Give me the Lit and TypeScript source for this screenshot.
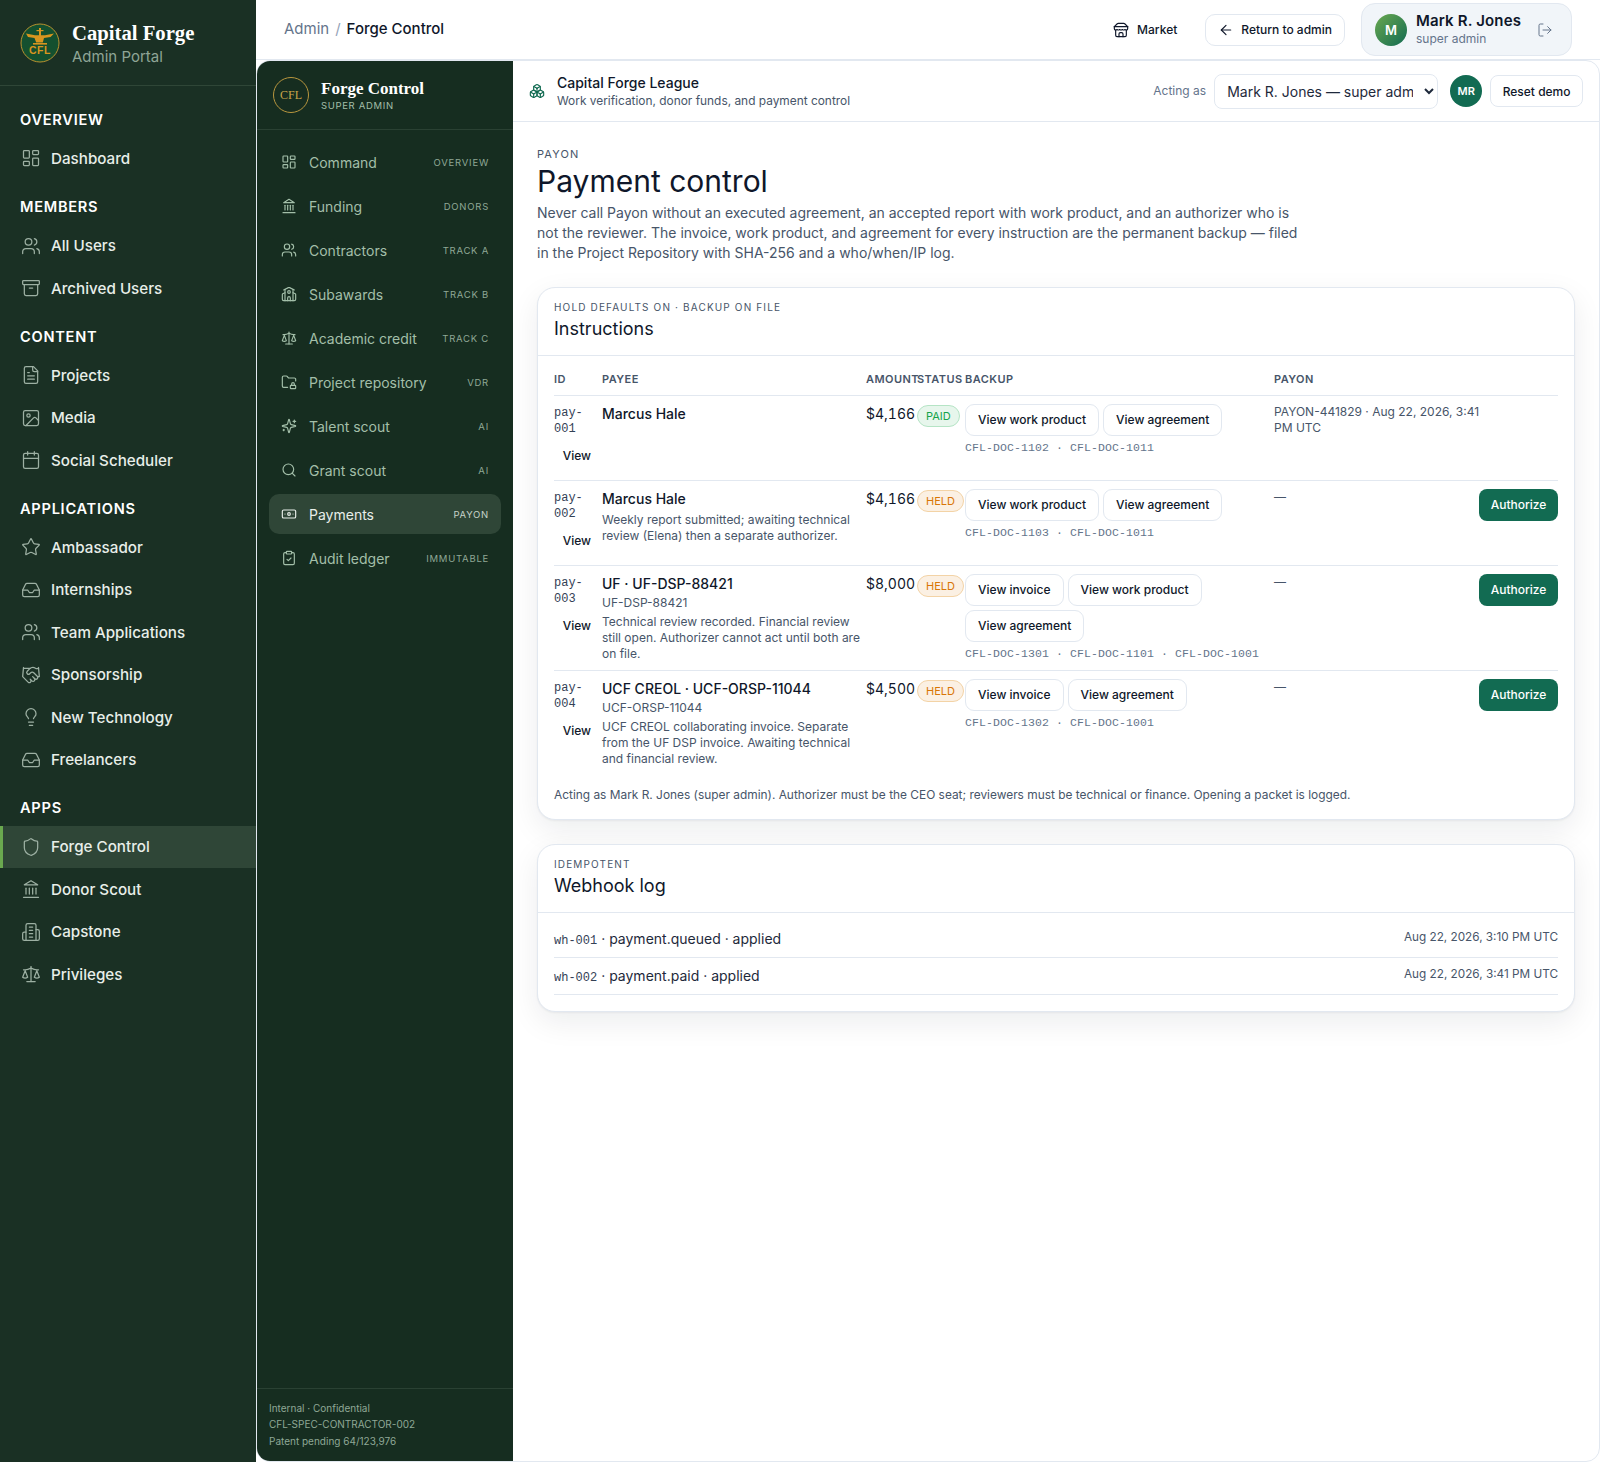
import { LitElement, html, css, svg } from 'lit';
import { customElement } from 'lit/decorators.js';

const icons: Record<string, unknown> = {
  dashboard: svg`<rect x="3" y="3" width="7" height="9" rx="1"/><rect x="14" y="3" width="7" height="5" rx="1"/><rect x="14" y="12" width="7" height="9" rx="1"/><rect x="3" y="16" width="7" height="5" rx="1"/>`,
  users: svg`<path d="M16 21v-2a4 4 0 0 0-4-4H6a4 4 0 0 0-4 4v2"/><circle cx="9" cy="7" r="4"/><path d="M22 21v-2a4 4 0 0 0-3-3.87"/><path d="M16 3.13a4 4 0 0 1 0 7.75"/>`,
  archive: svg`<rect x="2" y="3" width="20" height="5" rx="1"/><path d="M4 8v11a2 2 0 0 0 2 2h12a2 2 0 0 0 2-2V8"/><path d="M10 12h4"/>`,
  file: svg`<path d="M15 2H6a2 2 0 0 0-2 2v16a2 2 0 0 0 2 2h12a2 2 0 0 0 2-2V7Z"/><path d="M14 2v4a2 2 0 0 0 2 2h4"/><path d="M10 9H8"/><path d="M16 13H8"/><path d="M16 17H8"/>`,
  image: svg`<rect x="3" y="3" width="18" height="18" rx="2"/><circle cx="9" cy="9" r="2"/><path d="m21 15-3.086-3.086a2 2 0 0 0-2.828 0L6 21"/>`,
  calendar: svg`<path d="M8 2v4"/><path d="M16 2v4"/><rect x="3" y="4" width="18" height="18" rx="2"/><path d="M3 10h18"/>`,
  star: svg`<path d="M11.525 2.295a.53.53 0 0 1 .95 0l2.31 4.679a2.123 2.123 0 0 0 1.595 1.16l5.166.756a.53.53 0 0 1 .294.904l-3.736 3.638a2.123 2.123 0 0 0-.611 1.878l.882 5.14a.53.53 0 0 1-.771.56l-4.618-2.428a2.122 2.122 0 0 0-1.973 0L6.396 21.01a.53.53 0 0 1-.77-.56l.881-5.139a2.122 2.122 0 0 0-.611-1.879L2.16 9.795a.53.53 0 0 1 .294-.906l5.165-.755a2.122 2.122 0 0 0 1.597-1.16z"/>`,
  inbox: svg`<polyline points="22 12 16 12 14 15 10 15 8 12 2 12"/><path d="M5.45 5.11 2 12v6a2 2 0 0 0 2 2h16a2 2 0 0 0 2-2v-6l-3.45-6.89A2 2 0 0 0 16.76 4H7.24a2 2 0 0 0-1.79 1.11z"/>`,
  handshake: svg`<path d="m11 17 2 2a1 1 0 1 0 3-3"/><path d="m14 14 2.5 2.5a1 1 0 1 0 3-3l-3.88-3.88a3 3 0 0 0-4.24 0l-.88.88a1 1 0 1 1-3-3l2.81-2.81a5.79 5.79 0 0 1 7.06-.87l.47.28a2 2 0 0 0 1.42.25L21 4"/><path d="m21 3 1 11h-2"/><path d="M3 3 2 14l6.5 6.5a1 1 0 1 0 3-3"/><path d="M3 4h8"/>`,
  bulb: svg`<path d="M15 14c.2-1 .7-1.7 1.5-2.5 1-.9 1.5-2.2 1.5-3.5A6 6 0 0 0 6 8c0 1 .2 2.2 1.5 3.5.7.7 1.3 1.5 1.5 2.5"/><path d="M9 18h6"/><path d="M10 22h4"/>`,
  shield: svg`<path d="M20 13c0 5-3.5 7.5-7.66 8.95a1 1 0 0 1-.67-.01C7.5 20.5 4 18 4 13V6a1 1 0 0 1 1-1c2 0 4.5-1.2 6.24-2.72a1.17 1.17 0 0 1 1.52 0C14.51 3.81 17 5 19 5a1 1 0 0 1 1 1z"/>`,
  landmark: svg`<path d="M3 22h18"/><path d="M6 18v-7"/><path d="M10 18v-7"/><path d="M14 18v-7"/><path d="M18 18v-7"/><path d="M12 2l8 5H4z"/>`,
  building: svg`<path d="M6 22V4a2 2 0 0 1 2-2h8a2 2 0 0 1 2 2v18Z"/><path d="M6 12H4a2 2 0 0 0-2 2v6a2 2 0 0 0 2 2h2"/><path d="M18 9h2a2 2 0 0 1 2 2v9a2 2 0 0 1-2 2h-2"/><path d="M10 6h4"/><path d="M10 10h4"/><path d="M10 14h4"/><path d="M10 18h4"/>`,
  scale: svg`<path d="m16 16 3-8 3 8c-.87.65-1.92 1-3 1s-2.13-.35-3-1Z"/><path d="m2 16 3-8 3 8c-.87.65-1.92 1-3 1s-2.13-.35-3-1Z"/><path d="M7 21h10"/><path d="M12 3v18"/><path d="M3 7h2c2 0 5-1 7-2 2 1 5 2 7 2h2"/>`,
  school: svg`<path d="M14 22v-4a2 2 0 1 0-4 0v4"/><path d="m18 10 3.447 1.724a1 1 0 0 1 .553.894V20a2 2 0 0 1-2 2H4a2 2 0 0 1-2-2v-7.382a1 1 0 0 1 .553-.894L6 10"/><path d="M18 5v17"/><path d="m4 6 7.106-3.553a2 2 0 0 1 1.788 0L20 6"/><path d="M6 5v17"/><circle cx="12" cy="9" r="2"/>`,
  folder: svg`<rect x="14" y="17" width="8" height="5" rx="1"/><path d="M10 20H4a2 2 0 0 1-2-2V5a2 2 0 0 1 2-2h3.9a2 2 0 0 1 1.69.9l.81 1.2a2 2 0 0 0 1.67.9H20a2 2 0 0 1 2 2v2.5"/><path d="M20 17v-2a2 2 0 1 0-4 0v2"/>`,
  sparkles: svg`<path d="M9.937 15.5A2 2 0 0 0 8.5 14.063l-6.135-1.582a.5.5 0 0 1 0-.962L8.5 9.936A2 2 0 0 0 9.937 8.5l1.582-6.135a.5.5 0 0 1 .963 0L14.063 8.5A2 2 0 0 0 15.5 9.937l6.135 1.581a.5.5 0 0 1 0 .964L15.5 14.063a2 2 0 0 0-1.437 1.437l-1.582 6.135a.5.5 0 0 1-.963 0z"/><path d="M20 3v4"/><path d="M22 5h-4"/><path d="M4 17v2"/><path d="M5 18H3"/>`,
  search: svg`<circle cx="11" cy="11" r="8"/><path d="m21 21-4.3-4.3"/>`,
  banknote: svg`<rect x="2" y="6" width="20" height="12" rx="2"/><circle cx="12" cy="12" r="2"/><path d="M6 12h.01M18 12h.01"/>`,
  clipboard: svg`<rect x="8" y="2" width="8" height="4" rx="1"/><path d="M16 4h2a2 2 0 0 1 2 2v14a2 2 0 0 1-2 2H6a2 2 0 0 1-2-2V6a2 2 0 0 1 2-2h2"/><path d="m9 14 2 2 4-4"/>`,
  store: svg`<path d="m2 7 4.41-4.41A2 2 0 0 1 7.83 2h8.34a2 2 0 0 1 1.42.59L22 7"/><path d="M4 12v8a2 2 0 0 0 2 2h12a2 2 0 0 0 2-2v-8"/><path d="M15 22v-4a2 2 0 0 0-2-2h-2a2 2 0 0 0-2 2v4"/><path d="M2 7h20"/><path d="M22 7v3a2 2 0 0 1-2 2 2.7 2.7 0 0 1-1.59-.63.7.7 0 0 0-.82 0A2.7 2.7 0 0 1 16 12a2.7 2.7 0 0 1-1.59-.63.7.7 0 0 0-.82 0A2.7 2.7 0 0 1 12 12a2.7 2.7 0 0 1-1.59-.63.7.7 0 0 0-.82 0A2.7 2.7 0 0 1 8 12a2.7 2.7 0 0 1-1.59-.63.7.7 0 0 0-.82 0A2.7 2.7 0 0 1 4 12a2 2 0 0 1-2-2V7"/>`,
  arrow: svg`<path d="m12 19-7-7 7-7"/><path d="M19 12H5"/>`,
  logout: svg`<path d="M9 21H5a2 2 0 0 1-2-2V5a2 2 0 0 1 2-2h4"/><polyline points="16 17 21 12 16 7"/><path d="M21 12H9"/>`,
  boxes: svg`<path d="M2.97 12.92A2 2 0 0 0 2 14.63v3.24a2 2 0 0 0 .97 1.71l3 1.8a2 2 0 0 0 2.06 0L12 19v-5.5l-5-3-4.03 2.42Z"/><path d="m7 16.5-4.74-2.85"/><path d="m7 16.5 5-3"/><path d="M7 16.5v5.17"/><path d="M12 13.5V19l3.97 2.38a2 2 0 0 0 2.06 0l3-1.8a2 2 0 0 0 .97-1.71v-3.24a2 2 0 0 0-.97-1.71L17 10.5l-5 3Z"/><path d="m17 16.5-5-3"/><path d="m17 16.5 4.74-2.85"/><path d="M17 16.5v5.17"/><path d="M7.97 4.42A2 2 0 0 0 7 6.13v4.37l5 3 5-3V6.13a2 2 0 0 0-.97-1.71l-3-1.8a2 2 0 0 0-2.06 0l-3 1.8Z"/><path d="M12 8 7.26 5.15"/><path d="m12 8 4.74-2.85"/><path d="M12 13.5V8"/>`,
};

const icon = (name: string, size: number, stroke = 2) => html`<svg
  class="icon" width=${size} height=${size} viewBox="0 0 24 24" fill="none" stroke="currentColor"
  stroke-width=${stroke} stroke-linecap="round" stroke-linejoin="round">${icons[name]}</svg>`;

const adminNav = [
  { label: 'Overview', items: [['Dashboard', 'dashboard']] },
  { label: 'Members', items: [['All Users', 'users'], ['Archived Users', 'archive']] },
  { label: 'Content', items: [['Projects', 'file'], ['Media', 'image'], ['Social Scheduler', 'calendar']] },
  {
    label: 'Applications',
    items: [['Ambassador', 'star'], ['Internships', 'inbox'], ['Team Applications', 'users'], ['Sponsorship', 'handshake'], ['New Technology', 'bulb'], ['Freelancers', 'inbox']],
  },
  { label: 'Apps', items: [['Forge Control', 'shield'], ['Donor Scout', 'landmark'], ['Capstone', 'building'], ['Privileges', 'scale']] },
];

const forgeNav = [
  ['Command', 'dashboard', 'Overview'],
  ['Funding', 'landmark', 'Donors'],
  ['Contractors', 'users', 'Track A'],
  ['Subawards', 'school', 'Track B'],
  ['Academic credit', 'scale', 'Track C'],
  ['Project repository', 'folder', 'VDR'],
  ['Talent scout', 'sparkles', 'AI'],
  ['Grant scout', 'search', 'AI'],
  ['Payments', 'banknote', 'Payon'],
  ['Audit ledger', 'clipboard', 'Immutable'],
];

const rows = [
  { id: 'pay-001', name: 'Marcus Hale', amount: '$4,166', status: 'paid', docs: ['View work product', 'View agreement'], refs: 'CFL-DOC-1102 · CFL-DOC-1011', payon: 'PAYON-441829 · Aug 22, 2026, 3:41 PM UTC' },
  { id: 'pay-002', name: 'Marcus Hale', note: 'Weekly report submitted; awaiting technical review (Elena) then a separate authorizer.', amount: '$4,166', status: 'held', docs: ['View work product', 'View agreement'], refs: 'CFL-DOC-1103 · CFL-DOC-1011', payon: '—' },
  { id: 'pay-003', name: 'UF · UF-DSP-88421', sub: 'UF-DSP-88421', note: 'Technical review recorded. Financial review still open. Authorizer cannot act until both are on file.', amount: '$8,000', status: 'held', docs: ['View invoice', 'View work product', 'View agreement'], refs: 'CFL-DOC-1301 · CFL-DOC-1101 · CFL-DOC-1001', payon: '—' },
  { id: 'pay-004', name: 'UCF CREOL · UCF-ORSP-11044', sub: 'UCF-ORSP-11044', note: 'UCF CREOL collaborating invoice. Separate from the UF DSP invoice. Awaiting technical and financial review.', amount: '$4,500', status: 'held', docs: ['View invoice', 'View agreement'], refs: 'CFL-DOC-1302 · CFL-DOC-1001', payon: '—' },
];

const hooks = [
  ['wh-001', 'payment.queued · applied', 'Aug 22, 2026, 3:10 PM UTC'],
  ['wh-002', 'payment.paid · applied', 'Aug 22, 2026, 3:41 PM UTC'],
];

@customElement('app-root')
export class AppRoot extends LitElement {
  static styles = css`
    :host {
      display: flex;
      width: 1600px;
      height: 1462px;
      background: #fff;
      color: #0f172a;
      font-family: Inter, 'Liberation Sans', sans-serif;
      overflow: hidden;
    }
    .icon { flex: none; display: block; }
    .mono { font-family: 'Liberation Mono', monospace; }

    /* outer admin sidebar */
    .side {
      flex: none;
      width: 256px;
      background: #1a3024;
      color: #e8eee9;
    }
    .brand {
      height: 86px;
      box-sizing: border-box;
      display: flex;
      align-items: center;
      gap: 12px;
      padding: 0 20px;
      border-bottom: 1px solid #2f4637;
    }
    .brand-text { padding-top: 3px; }
    .brand-name {
      font-family: 'Liberation Serif', serif;
      font-weight: 700;
      font-size: 20.7px;
      line-height: 25px;
      color: #fff;
    }
    .brand-sub { margin-top: 1px; font-size: 15px; line-height: 20px; color: #8fa596; }
    .groups { padding-top: 18px; }
    .group { margin-bottom: 11.5px; }
    .group-label {
      padding: 0 20px;
      font-size: 14.6px;
      line-height: 33.25px;
      font-weight: 600;
      letter-spacing: 0.05em;
      text-transform: uppercase;
      color: #fff;
    }
    .item {
      height: 42.45px;
      display: flex;
      align-items: center;
      gap: 10px;
      padding: 0 20px 0 21px;
      font-size: 15.2px;
      font-weight: 500;
    }
    .item .icon { color: #9db0a3; }
    .item.on {
      background: #2f4637;
      box-shadow: inset 3px 0 0 #6aa84f;
    }

    /* right column */
    .right { flex: 1; min-width: 0; display: flex; flex-direction: column; }
    .top {
      flex: none;
      height: 60px;
      box-sizing: border-box;
      display: flex;
      align-items: center;
      padding: 0 28px;
      border-bottom: 1px solid #e2e8f0;
    }
    .crumbs { display: flex; gap: 6px; font-size: 15px; color: #64748b; flex: 1; padding-bottom: 2px; }
    .crumbs b { font-weight: 500; color: #0f172a; }
    .crumbs i { font-style: normal; color: #94a3b8; }
    .market { display: flex; align-items: center; gap: 8px; font-size: 12px; font-weight: 500; margin-right: 28px; }
    .back {
      height: 32px;
      box-sizing: border-box;
      display: flex;
      align-items: center;
      gap: 7px;
      padding: 0 12px;
      border: 1px solid #e2e8f0;
      border-radius: 10px;
      font-size: 12px;
      font-weight: 500;
      margin-right: 16px;
    }
    .user {
      width: 211px;
      height: 53px;
      box-sizing: border-box;
      display: flex;
      align-items: center;
      gap: 9px;
      padding: 0 18px 0 13px;
      background: #f1f5f9;
      border: 1px solid #e2e8f0;
      border-radius: 14px;
    }
    .user-av {
      width: 32px;
      height: 32px;
      border-radius: 50%;
      display: grid;
      place-items: center;
      background: linear-gradient(135deg, #6aa84f, #126b52);
      color: #fff;
      font-size: 13px;
      font-weight: 600;
    }
    .user-text { flex: 1; padding-bottom: 2px; }
    .user-name { font-size: 15px; line-height: 20px; font-weight: 600; letter-spacing: 0.01em; }
    .user-role { font-size: 12px; line-height: 16px; color: #64748b; }
    .user .icon { color: #64748b; }

    /* forge control shell */
    .shell {
      flex: 1;
      min-height: 0;
      display: flex;
      border: 1px solid #e2e8f0;
      border-radius: 14px;
      overflow: hidden;
      background: #fff;
    }
    .fside {
      flex: none;
      width: 256px;
      display: flex;
      flex-direction: column;
      background: #162d20;
      color: #a3bfa9;
    }
    .fbrand {
      flex: none;
      height: 69px;
      box-sizing: border-box;
      display: flex;
      align-items: center;
      gap: 12px;
      padding: 0 16px;
      border-bottom: 1px solid #2a4133;
    }
    .seal {
      width: 36px;
      height: 36px;
      box-sizing: border-box;
      border: 1px solid #b8963e;
      border-radius: 50%;
      display: grid;
      place-items: center;
      font-family: 'Liberation Serif', serif;
      font-size: 12px;
      color: #c9a64a;
    }
    .fbrand-text { padding-top: 2px; }
    .fbrand-name {
      font-family: 'Liberation Serif', serif;
      font-weight: 700;
      font-size: 17px;
      line-height: 20px;
      color: #fff;
    }
    .fbrand-sub { font-size: 9.5px; line-height: 14px; letter-spacing: 0.07em; color: #a3bfa9; }
    .fnav { flex: 1; display: flex; flex-direction: column; gap: 4px; padding: 12px; }
    .fitem {
      height: 40px;
      display: flex;
      align-items: center;
      gap: 12px;
      padding: 0 12px;
      border-radius: 10px;
      font-size: 14px;
    }
    .fitem span { flex: 1; }
    .fitem em {
      font-style: normal;
      font-size: 9.5px;
      letter-spacing: 0.08em;
      text-transform: uppercase;
      color: #8fa896;
    }
    .fitem.on { background: #2f4637; color: #e8eee9; }
    .fitem.on em { color: #c6d3c9; }
    .ffoot {
      flex: none;
      padding: 11px 12px 12px;
      border-top: 1px solid #2a4133;
      font-size: 10px;
      line-height: 16.5px;
      color: #8fa896;
    }

    /* main */
    .main { flex: 1; min-width: 0; display: flex; flex-direction: column; }
    .mhead {
      flex: none;
      height: 61px;
      box-sizing: border-box;
      display: flex;
      align-items: center;
      gap: 8px;
      padding: 0 16px;
      border-bottom: 1px solid #e2e8f0;
    }
    .mhead > .icon { color: #126b52; margin-right: 4px; }
    .org { flex: 1; }
    .org-name { font-size: 14px; line-height: 18px; font-weight: 500; }
    .org-sub { margin-top: 1px; font-size: 11.9px; line-height: 16px; color: #475569; }
    .acting { font-size: 12px; color: #64748b; padding-bottom: 1px; }
    select {
      width: 224px;
      height: 35px;
      box-sizing: border-box;
      padding: 0 8px;
      background: #fff;
      border: 1px solid #e2e8f0;
      border-radius: 8px;
      font: inherit;
      font-size: 14px;
      color: #1e293b;
      margin-right: 4px;
    }
    .mr {
      width: 32px;
      height: 32px;
      border-radius: 50%;
      display: grid;
      place-items: center;
      background: #126b52;
      color: #fff;
      font-size: 11px;
      font-weight: 600;
    }
    .reset {
      height: 32px;
      box-sizing: border-box;
      display: flex;
      align-items: center;
      padding: 0 11.5px;
      border: 1px solid #e2e8f0;
      border-radius: 8px;
      font-size: 12px;
      font-weight: 500;
    }
    .content { padding: 24px 24px 0; }
    .eyebrow {
      font-size: 11px;
      line-height: 16px;
      letter-spacing: 0.1em;
      text-transform: uppercase;
      color: #475569;
    }
    h1 { margin: 0; font-size: 30px; line-height: 38px; font-weight: 400; color: #0f172a; }
    .lede { margin: 3px 0 24px; max-width: 772px; font-size: 14px; line-height: 20px; color: #475569; }
    .card {
      border: 1px solid #e2e8f0;
      border-radius: 18px;
      background: #fff;
      box-shadow: 0 1px 2px rgba(15, 23, 42, 0.05), 0 10px 30px rgba(15, 23, 42, 0.08);
      margin-bottom: 24px;
    }
    .card-head { height: 68px; box-sizing: border-box; padding: 11px 16px 0; border-bottom: 1px solid #e2e8f0; }
    .card-head .eyebrow { font-size: 10px; letter-spacing: 0.115em; }
    h2 { margin: 0; font-size: 18px; line-height: 27px; font-weight: 400; color: #0f172a; }
    .card-body { padding: 0 16px 16px; }

    table { width: 100%; table-layout: fixed; border-collapse: collapse; }
    th {
      height: 39px;
      box-sizing: border-box;
      padding: 0 0 8px;
      vertical-align: bottom;
      text-align: left;
      white-space: nowrap;
      font-size: 11px;
      line-height: 16px;
      font-weight: 600;
      letter-spacing: 0.04em;
      text-transform: uppercase;
      color: #475569;
      border-bottom: 1px solid #e2e8f0;
    }
    td { padding: 8px 0; vertical-align: top; border-bottom: 1px solid #e2e8f0; }
    tr:last-child td { border-bottom: 0; }
    .rid { display: block; margin-top: 1px; font-size: 12px; line-height: 16px; color: #334155; }
    .ghost {
      display: flex;
      align-items: center;
      justify-content: flex-end;
      width: 37px;
      height: 32px;
      margin-top: 3px;
      font-size: 12px;
      font-weight: 500;
    }
    .name { margin: -1px 0 1px; font-size: 14px; line-height: 21px; font-weight: 500; }
    .sub { font-size: 12px; line-height: 16px; color: #475569; }
    .note { margin-top: 3px; padding-right: 4px; font-size: 12px; line-height: 16px; color: #475569; }
    .amount { margin-top: -1px; font-size: 14px; line-height: 21px; white-space: nowrap; font-variant-numeric: tabular-nums; }
    .badge {
      display: inline-block;
      margin-top: 1px;
      padding: 0 8px;
      font-size: 11px;
      line-height: 20px;
      border-radius: 999px;
      border: 1px solid;
    }
    .badge.paid { color: #16a34a; background: #e7f6ec; border-color: #b5e4c5; }
    .badge.held { color: #d97706; background: #fbf0e3; border-color: #f3d3a6; }
    .chips { display: flex; flex-wrap: wrap; gap: 4px; }
    .chip {
      height: 32px;
      box-sizing: border-box;
      display: flex;
      align-items: center;
      padding: 0 12px;
      border: 1px solid #e2e8f0;
      border-radius: 9px;
      font-size: 12px;
      font-weight: 500;
      white-space: nowrap;
    }
    .refs { margin-top: 4px; font-size: 11.5px; line-height: 16px; letter-spacing: 0.1px; color: #64748b; }
    .payon { margin-right: -8px; font-size: 12px; line-height: 16px; color: #475569; }
    .auth {
      height: 32px;
      box-sizing: border-box;
      display: flex;
      align-items: center;
      justify-content: center;
      background: #126b52;
      color: #fff;
      border-radius: 8px;
      font-size: 12px;
      font-weight: 500;
    }
    .foot { margin-top: 12px; font-size: 11.9px; line-height: 16px; color: #475569; }

    .hooks { padding-top: 8px; }
    .hook {
      height: 37px;
      box-sizing: border-box;
      display: flex;
      justify-content: space-between;
      padding-top: 8px;
      border-bottom: 1px solid #e2e8f0;
      font-size: 14px;
      line-height: 20px;
      color: #1e293b;
    }
    .hook .mono { font-size: 12px; color: #334155; }
    .hook time { font-size: 11.75px; line-height: 16px; color: #475569; }
  `;

  renderLogo() {
    return html`<svg width="40" height="40" viewBox="0 0 40 40" class="icon">
      <circle cx="20" cy="20" r="19" fill="#14502f" stroke="#b8922f" stroke-width="1"/>
      <g fill="#d8951f">
        <path d="M6 10.5l9 1.8h10l9-1.8-3.5 3.4-6.5 1.2-1.2 4.4h-6.6L14.5 15.1 8 13.9z"/>
        <rect x="19" y="5" width="2" height="8"/>
        <rect x="16.5" y="7" width="7" height="1.2"/>
        <rect x="13" y="20" width="14" height="1.6"/>
      </g>
      <text x="20" y="30.5" text-anchor="middle" font-family="'Liberation Sans', sans-serif" font-weight="700" font-size="10.5" letter-spacing="0.5" fill="#d8951f">CFL</text>
    </svg>`;
  }

  renderSide() {
    return html`<aside class="side">
      <div class="brand">
        ${this.renderLogo()}
        <div class="brand-text">
          <div class="brand-name">Capital Forge</div>
          <div class="brand-sub">Admin Portal</div>
        </div>
      </div>
      <div class="groups">
        ${adminNav.map(
          (g) => html`<div class="group">
            <div class="group-label">${g.label}</div>
            ${g.items.map(
              ([name, ic]) => html`<div class="item ${name === 'Forge Control' ? 'on' : ''}">
                ${icon(ic, 20, 1.5)}<span>${name}</span>
              </div>`,
            )}
          </div>`,
        )}
      </div>
    </aside>`;
  }

  renderForgeSide() {
    return html`<aside class="fside">
      <div class="fbrand">
        <div class="seal">CFL</div>
        <div class="fbrand-text">
          <div class="fbrand-name">Forge Control</div>
          <div class="fbrand-sub">SUPER ADMIN</div>
        </div>
      </div>
      <nav class="fnav">
        ${forgeNav.map(
          ([name, ic, tag]) => html`<div class="fitem ${name === 'Payments' ? 'on' : ''}">
            ${icon(ic, 16, 1.75)}<span>${name}</span><em>${tag}</em>
          </div>`,
        )}
      </nav>
      <div class="ffoot">
        <div>Internal · Confidential</div>
        <div>CFL-SPEC-CONTRACTOR-002</div>
        <div>Patent pending 64/123,976</div>
      </div>
    </aside>`;
  }

  renderRow(r: (typeof rows)[number]) {
    return html`<tr>
      <td>
        <span class="rid mono">${r.id}</span>
        <div class="ghost">View</div>
      </td>
      <td>
        <div class="name">${r.name}</div>
        ${r.sub ? html`<div class="sub">${r.sub}</div>` : ''}
        ${r.note ? html`<div class="note">${r.note}</div>` : ''}
      </td>
      <td><div class="amount">${r.amount}</div></td>
      <td><span class="badge ${r.status}">${r.status.toUpperCase()}</span></td>
      <td>
        <div class="chips">${r.docs.map((d) => html`<div class="chip">${d}</div>`)}</div>
        <div class="refs mono">${r.refs}</div>
      </td>
      <td><div class="payon">${r.payon}</div></td>
      <td>${r.payon === '—' ? html`<div class="auth">Authorize</div>` : ''}</td>
    </tr>`;
  }

  render() {
    return html`
      ${this.renderSide()}
      <div class="right">
        <header class="top">
          <div class="crumbs"><span>Admin</span><i>/</i><b>Forge Control</b></div>
          <div class="market">${icon('store', 16, 1.75)}Market</div>
          <div class="back">${icon('arrow', 16, 1.75)}Return to admin</div>
          <div class="user">
            <div class="user-av">M</div>
            <div class="user-text">
              <div class="user-name">Mark R. Jones</div>
              <div class="user-role">super admin</div>
            </div>
            ${icon('logout', 16, 1.5)}
          </div>
        </header>
        <div class="shell">
          ${this.renderForgeSide()}
          <div class="main">
            <div class="mhead">
              ${icon('boxes', 16, 1.75)}
              <div class="org">
                <div class="org-name">Capital Forge League</div>
                <div class="org-sub">Work verification, donor funds, and payment control</div>
              </div>
              <span class="acting">Acting as</span>
              <select><option>Mark R. Jones — super admin</option></select>
              <div class="mr">MR</div>
              <div class="reset">Reset demo</div>
            </div>
            <div class="content">
              <div class="eyebrow">Payon</div>
              <h1>Payment control</h1>
              <p class="lede">
                Never call Payon without an executed agreement, an accepted report with work product, and an
                authorizer who is not the reviewer. The invoice, work product, and agreement for every instruction
                are the permanent backup — filed in the Project Repository with SHA-256 and a who/when/IP log.
              </p>
              <section class="card">
                <div class="card-head">
                  <div class="eyebrow">Hold defaults on · Backup on file</div>
                  <h2>Instructions</h2>
                </div>
                <div class="card-body">
                  <table>
                    <colgroup>
                      <col style="width:48px" /><col style="width:264px" /><col style="width:51px" />
                      <col style="width:48px" /><col style="width:309px" /><col style="width:205px" /><col />
                    </colgroup>
                    <thead>
                      <tr><th>ID</th><th>Payee</th><th>Amount</th><th>Status</th><th>Backup</th><th>Payon</th><th></th></tr>
                    </thead>
                    <tbody>${rows.map((r) => this.renderRow(r))}</tbody>
                  </table>
                  <div class="foot">
                    Acting as Mark R. Jones (super admin). Authorizer must be the CEO seat; reviewers must be technical
                    or finance. Opening a packet is logged.
                  </div>
                </div>
              </section>
              <section class="card">
                <div class="card-head">
                  <div class="eyebrow">Idempotent</div>
                  <h2>Webhook log</h2>
                </div>
                <div class="card-body hooks">
                  ${hooks.map(
                    ([id, text, at]) => html`<div class="hook">
                      <div><span class="mono">${id}</span> · ${text}</div>
                      <time>${at}</time>
                    </div>`,
                  )}
                </div>
              </section>
            </div>
          </div>
        </div>
      </div>
    `;
  }
}
